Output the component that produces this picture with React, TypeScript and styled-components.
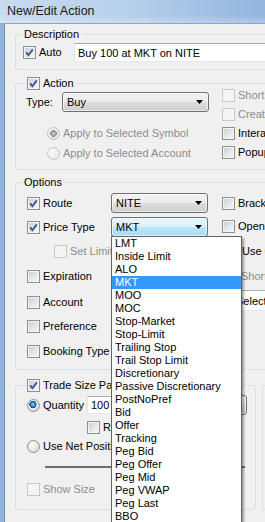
import React from "react";
import styled, { createGlobalStyle } from "styled-components";

const GlobalStyle = createGlobalStyle`
  html, body {
    margin: 0;
    padding: 0;
    background: #f0f0f0;
  }
  body {
    font-family: "Liberation Sans", Arial, sans-serif;
    font-size: 11px;
    color: #000;
  }
  * {
    box-sizing: border-box;
  }
`;

const Viewport = styled.div`
  width: 265px;
  height: 522px;
  overflow: hidden;
`;

const Window = styled.div`
  width: 440px;
  height: 522px;
  display: flex;
  flex-direction: column;
`;

const TitleBar = styled.div`
  height: 23px;
  flex: none;
  display: flex;
  align-items: center;
  padding: 0 0 2px 7px;
  font-size: 12.5px;
  color: #1a1a1a;
  background: linear-gradient(180deg, rgba(255, 255, 255, 0) 65%, rgba(255, 255, 255, 0.25) 100%),
    linear-gradient(90deg, #c8dbf0 0%, #b6cfeb 30%, #87acda 70%, #6090cd 100%);
`;

const Frame = styled.div`
  flex: 1;
  display: flex;
  padding-left: 4px;
  background: linear-gradient(90deg, #93b3dc, #b5cdea);
`;

const Client = styled.div`
  flex: 1;
  display: flex;
  flex-direction: column;
  padding: 3px 0 0 10px;
  background: #f0f0f0;
  border-left: 1px solid #7190b8;
  border-top: 1px solid #8fa6c2;
`;

const GroupBox = styled.fieldset<{ $w: number; $pl: number; $pb: number; $mt?: number }>`
  margin: ${(p) => p.$mt ?? 0}px 0 0 0;
  width: ${(p) => p.$w}px;
  min-width: 0;
  flex: none;
  border: 1px solid #d5dfe5;
  border-radius: 3px;
  padding: 0 0 ${(p) => p.$pb}px ${(p) => p.$pl}px;
`;

const Legend = styled.legend<{ $offset?: number }>`
  height: 14px;
  display: flex;
  align-items: center;
  gap: 3px;
  padding: 0 2px 0 1px;
  margin-left: ${(p) => p.$offset ?? 0}px;
  line-height: 14px;
  white-space: nowrap;
`;

const Split = styled.div`
  display: flex;
`;

const Column = styled.div<{ $w?: number; $mt?: number }>`
  display: flex;
  flex-direction: column;
  flex: none;
  width: ${(p) => (p.$w ? `${p.$w}px` : "auto")};
  margin-top: ${(p) => p.$mt ?? 0}px;
`;

const Row = styled.div<{ $h: number; $indent?: number; $mt?: number }>`
  height: ${(p) => p.$h}px;
  margin-top: ${(p) => p.$mt ?? 0}px;
  padding-left: ${(p) => p.$indent ?? 0}px;
  display: flex;
  align-items: center;
  white-space: nowrap;
  flex: none;
`;

const Label = styled.span<{ $disabled?: boolean; $w?: number }>`
  color: ${(p) => (p.$disabled ? "#8d8d8d" : "#000")};
  width: ${(p) => (p.$w ? `${p.$w}px` : "auto")};
  flex: none;
  line-height: 13px;
`;

const Option = styled.span<{ $w?: number }>`
  display: inline-flex;
  align-items: center;
  gap: 3px;
  flex: none;
  width: ${(p) => (p.$w ? `${p.$w}px` : "auto")};
  white-space: nowrap;
`;

const Box = styled.span<{ $disabled?: boolean }>`
  width: 13px;
  height: 13px;
  flex: none;
  display: inline-flex;
  align-items: center;
  justify-content: center;
  border: 1px solid ${(p) => (p.$disabled ? "#c8c8c8" : "#8e8f8f")};
  background: ${(p) =>
    p.$disabled ? "#f5f5f5" : "linear-gradient(135deg, #c7cacf 0%, #e6e7e9 55%, #f7f7f7 100%)"};
  box-shadow: inset 0 0 0 1px ${(p) => (p.$disabled ? "#f5f5f5" : "#f4f4f4")};
`;

const Dot = styled.span<{ $on?: boolean; $disabled?: boolean }>`
  width: 13px;
  height: 13px;
  flex: none;
  border-radius: 50%;
  border: 1px solid ${(p) => (p.$disabled ? "#c4c4c4" : "#8e8f8f")};
  background: ${(p) =>
    p.$on
      ? p.$disabled
        ? "radial-gradient(circle at 50% 50%, #c8c8c8 0, #9a9a9a 2.6px, #8a8a8a 3.4px, transparent 3.6px), radial-gradient(circle at 35% 35%, #fbfbfb, #dadada)"
        : "radial-gradient(circle at 45% 40%, #8fd0fa 0, #2b77cf 2.4px, #173f86 3.5px, transparent 3.7px), radial-gradient(circle at 35% 35%, #fbfbfb, #d4d4d4)"
      : p.$disabled
      ? "radial-gradient(circle at 35% 35%, #fbfbfb, #e4e4e4)"
      : "radial-gradient(circle at 35% 35%, #fbfbfb, #d4d4d4)"};
`;

const Combo = styled.div<{ $w: number; $focused?: boolean; $h?: number; $ml?: number }>`
  position: relative;
  width: ${(p) => p.$w}px;
  height: ${(p) => p.$h ?? 20}px;
  margin-left: ${(p) => p.$ml ?? 0}px;
  flex: none;
  display: flex;
  align-items: center;
  justify-content: space-between;
  padding: 0 5px 0 4px;
  border-radius: 3px;
  border: 1px solid ${(p) => (p.$focused ? "#3c7fb1" : "#707070")};
  background: ${(p) =>
    p.$focused
      ? "linear-gradient(180deg, #eaf6fd 0%, #d9f0fc 48%, #bee6fd 52%, #a7d9f5 100%)"
      : "linear-gradient(180deg, #f2f2f2 0%, #ebebeb 48%, #dddddd 52%, #cfcfcf 100%)"};
  box-shadow: inset 0 0 0 1px rgba(255, 255, 255, 0.6);
`;

const TextField = styled.div<{ $w: number; $h: number }>`
  width: ${(p) => p.$w}px;
  height: ${(p) => p.$h}px;
  flex: none;
  display: flex;
  align-items: center;
  padding-left: 3px;
  background: #fff;
  border: 1px solid;
  border-color: #abadb3 #dbdfe6 #e3e9ef #e2e3ea;
  white-space: nowrap;
  overflow: hidden;
`;

const DropList = styled.ul`
  position: absolute;
  top: 100%;
  left: -1px;
  width: 131px;
  margin: 0;
  padding: 0;
  list-style: none;
  background: #fff;
  border: 1px solid #646464;
  box-shadow: 2px 2px 2px rgba(0, 0, 0, 0.35);
  z-index: 10;
`;

const ListItem = styled.li<{ $selected?: boolean }>`
  height: 13px;
  line-height: 13px;
  padding-left: 3px;
  white-space: nowrap;
  background: ${(p) => (p.$selected ? "#3399ff" : "transparent")};
  color: ${(p) => (p.$selected ? "#fff" : "#000")};
`;

const Track = styled.div`
  margin-left: 18px;
  width: 200px;
  height: 2px;
  background: #6d6d6d;
`;

const BottomRow = styled.div`
  display: flex;
  gap: 6px;
  margin-top: 8px;
`;

const Arrow = () => (
  <svg width="7" height="4" viewBox="0 0 7 4">
    <polygon points="0,0 7,0 3.5,4" fill="#000" />
  </svg>
);

const CheckBox: React.FC<{ checked?: boolean; disabled?: boolean }> = ({ checked, disabled }) => (
  <Box $disabled={disabled}>
    {checked && (
      <svg width="11" height="11" viewBox="0 0 11 11">
        <path d="M2.2 5.4 L4.4 8.2 L8.8 2.4" fill="none" stroke="#3f5597" strokeWidth="1.9" />
      </svg>
    )}
  </Box>
);

const Check: React.FC<{ label: string; checked?: boolean; disabled?: boolean; w?: number }> = ({
  label,
  checked,
  disabled,
  w,
}) => (
  <Option $w={w}>
    <CheckBox checked={checked} disabled={disabled} />
    <Label $disabled={disabled}>{label}</Label>
  </Option>
);

const Radio: React.FC<{ label: string; on?: boolean; disabled?: boolean; w?: number }> = ({
  label,
  on,
  disabled,
  w,
}) => (
  <Option $w={w}>
    <Dot $on={on} $disabled={disabled} />
    <Label $disabled={disabled}>{label}</Label>
  </Option>
);

const priceTypes = [
  "LMT",
  "Inside Limit",
  "ALO",
  "MKT",
  "MOO",
  "MOC",
  "Stop-Market",
  "Stop-Limit",
  "Trailing Stop",
  "Trail Stop Limit",
  "Discretionary",
  "Passive Discretionary",
  "PostNoPref",
  "Bid",
  "Offer",
  "Tracking",
  "Peg Bid",
  "Peg Offer",
  "Peg Mid",
  "Peg VWAP",
  "Peg Last",
  "BBO",
];

const App: React.FC = () => {
  return (
    <Viewport>
      <GlobalStyle />
      <Window>
        <TitleBar>New/Edit Action</TitleBar>
        <Frame>
          <Client>
            <GroupBox $w={400} $pl={7} $pb={7}>
              <Legend>Description</Legend>
              <Row $h={19} $mt={2}>
                <Check label="Auto" checked w={51} />
                <TextField $w={330} $h={19}>
                  Buy 100 at MKT on NITE
                </TextField>
              </Row>
            </GroupBox>

            <GroupBox $w={400} $pl={10} $pb={9} $mt={6}>
              <Legend>
                <CheckBox checked />
                <span>Action</span>
              </Legend>
              <Split>
                <Column $w={196}>
                  <Row $h={20} $mt={2}>
                    <Label $w={36}>Type:</Label>
                    <Combo $w={147}>
                      <span>Buy</span>
                      <Arrow />
                    </Combo>
                  </Row>
                  <Row $h={13} $mt={15} $indent={21}>
                    <Radio label="Apply to Selected Symbol" on disabled />
                  </Row>
                  <Row $h={13} $mt={7} $indent={21}>
                    <Radio label="Apply to Selected Account" disabled />
                  </Row>
                </Column>
                <Column $mt={-1}>
                  <Row $h={13}>
                    <Check label="Short Sell" disabled />
                  </Row>
                  <Row $h={13} $mt={6}>
                    <Check label="Create Alert" disabled />
                  </Row>
                  <Row $h={13} $mt={6}>
                    <Check label="Interactive" />
                  </Row>
                  <Row $h={13} $mt={6}>
                    <Check label="Popup Window" />
                  </Row>
                </Column>
              </Split>
            </GroupBox>

            <GroupBox $w={400} $pl={11} $pb={4} $mt={5}>
              <Legend $offset={-4}>Options</Legend>
              <Split>
                <Column $w={195} $mt={2}>
                  <Row $h={24}>
                    <Check label="Route" checked w={84} />
                    <Combo $w={97}>
                      <span>NITE</span>
                      <Arrow />
                    </Combo>
                  </Row>
                  <Row $h={24}>
                    <Check label="Price Type" checked w={84} />
                    <Combo $w={97} $focused>
                      <span>MKT</span>
                      <Arrow />
                      <DropList>
                        {priceTypes.map((t) => (
                          <ListItem key={t} $selected={t === "MKT"}>
                            {t}
                          </ListItem>
                        ))}
                      </DropList>
                    </Combo>
                  </Row>
                  <Row $h={24} $indent={27}>
                    <Check label="Set Limit Price" disabled />
                  </Row>
                  <Row $h={27}>
                    <Check label="Expiration" w={84} />
                  </Row>
                  <Row $h={24}>
                    <Check label="Account" w={84} />
                  </Row>
                  <Row $h={24}>
                    <Check label="Preference" w={84} />
                  </Row>
                  <Row $h={27}>
                    <Check label="Booking Type" w={84} />
                  </Row>
                </Column>
                <Column $mt={2}>
                  <Row $h={24}>
                    <Check label="Bracket" />
                  </Row>
                  <Row $h={23}>
                    <Check label="Open Close" />
                  </Row>
                  <Row $h={26} $indent={4}>
                    <Check label="Use Custom" />
                  </Row>
                  <Row $h={24} $indent={3}>
                    <Check label="Short Locate" disabled />
                  </Row>
                  <Row $h={25} $indent={10}>
                    <TextField $w={150} $h={21}>
                      Select...
                    </TextField>
                  </Row>
                </Column>
              </Split>
            </GroupBox>

            <BottomRow>
              <GroupBox $w={241} $pl={11} $pb={7}>
                <Legend $offset={-1}>
                  <CheckBox checked />
                  <span>Trade Size Parameters</span>
                </Legend>
                <Row $h={24} $mt={1}>
                  <Radio label="Quantity" on w={60} />
                  <TextField $w={44} $h={18}>
                    100
                  </TextField>
                  <Combo $w={112} $ml={4}>
                    <span>Shares</span>
                    <Arrow />
                  </Combo>
                </Row>
                <Row $h={20} $indent={60}>
                  <Check label="Round Lots" />
                </Row>
                <Row $h={18}>
                  <Radio label="Use Net Position" />
                </Row>
                <Row $h={24}>
                  <Track />
                </Row>
                <Row $h={20}>
                  <Check label="Show Size" disabled />
                </Row>
              </GroupBox>
              <GroupBox $w={150} $pl={11} $pb={7}>
                <Legend>Display</Legend>
                <Row $h={110} />
              </GroupBox>
            </BottomRow>
          </Client>
        </Frame>
      </Window>
    </Viewport>
  );
};

export default App;
